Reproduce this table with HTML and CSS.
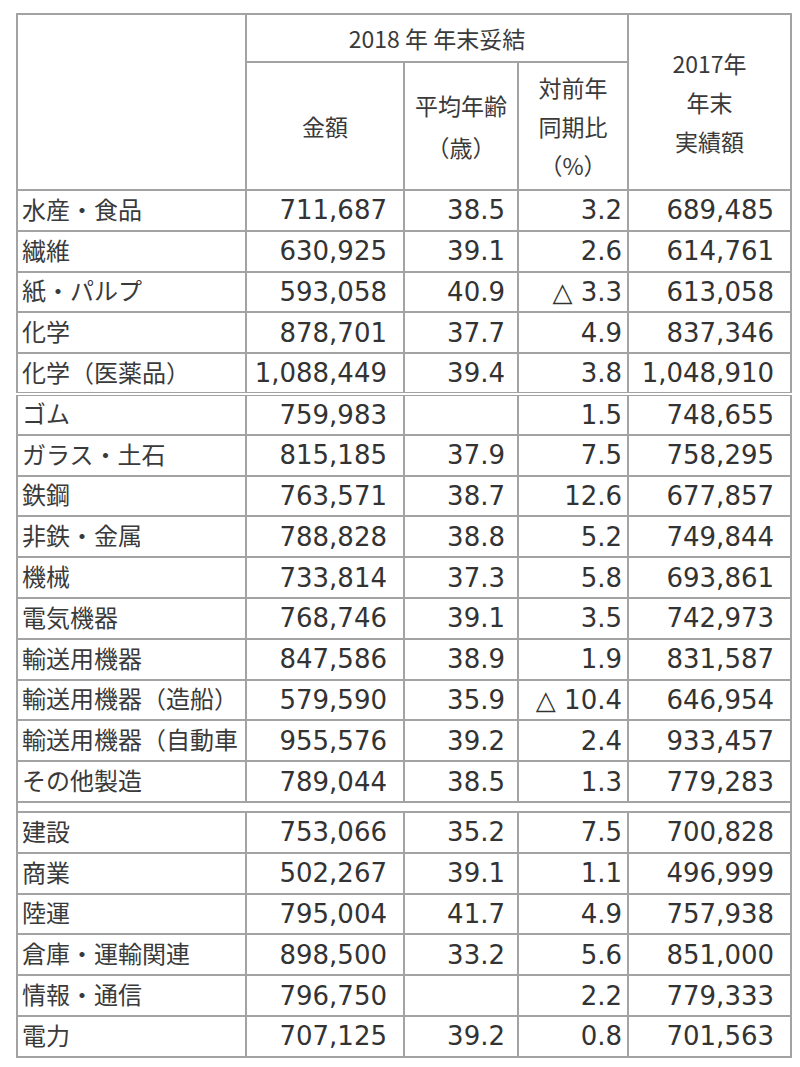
FILE: index.html
```html
<!DOCTYPE html>
<html lang="ja">
<head>
<meta charset="utf-8">
<title>2018年 年末妥結</title>
<link rel="stylesheet" href="styles.css">
</head>
<body>
<table class="wage">
  <colgroup>
    <col class="c-name">
    <col class="c-amt">
    <col class="c-age">
    <col class="c-yoy">
    <col class="c-prev">
  </colgroup>
  <thead>
    <tr class="h1">
      <th rowspan="2" class="blank"></th>
      <th colspan="3">2018 年 年末妥結</th>
      <th rowspan="2" class="multi">2017年<br>年末<br>実績額</th>
    </tr>
    <tr class="h2">
      <th>金額</th>
      <th class="multi2">平均年齢<br>（歳）</th>
      <th class="multi">対前年<br>同期比<br>（%）</th>
    </tr>
  </thead>
  <tbody>
    <tr><td class="name">水産・食品</td><td class="amt">711,687</td><td class="age">38.5</td><td class="yoy">3.2</td><td class="prev">689,485</td></tr>
    <tr><td class="name">繊維</td><td class="amt">630,925</td><td class="age">39.1</td><td class="yoy">2.6</td><td class="prev">614,761</td></tr>
    <tr><td class="name">紙・パルプ</td><td class="amt">593,058</td><td class="age">40.9</td><td class="yoy">△ 3.3</td><td class="prev">613,058</td></tr>
    <tr><td class="name">化学</td><td class="amt">878,701</td><td class="age">37.7</td><td class="yoy">4.9</td><td class="prev">837,346</td></tr>
    <tr><td class="name">化学（医薬品）</td><td class="amt">1,088,449</td><td class="age">39.4</td><td class="yoy">3.8</td><td class="prev">1,048,910</td></tr>
    <tr class="dbl"><td class="name">ゴム</td><td class="amt">759,983</td><td class="age"></td><td class="yoy">1.5</td><td class="prev">748,655</td></tr>
    <tr><td class="name">ガラス・土石</td><td class="amt">815,185</td><td class="age">37.9</td><td class="yoy">7.5</td><td class="prev">758,295</td></tr>
    <tr><td class="name">鉄鋼</td><td class="amt">763,571</td><td class="age">38.7</td><td class="yoy">12.6</td><td class="prev">677,857</td></tr>
    <tr><td class="name">非鉄・金属</td><td class="amt">788,828</td><td class="age">38.8</td><td class="yoy">5.2</td><td class="prev">749,844</td></tr>
    <tr><td class="name">機械</td><td class="amt">733,814</td><td class="age">37.3</td><td class="yoy">5.8</td><td class="prev">693,861</td></tr>
    <tr><td class="name">電気機器</td><td class="amt">768,746</td><td class="age">39.1</td><td class="yoy">3.5</td><td class="prev">742,973</td></tr>
    <tr><td class="name">輸送用機器</td><td class="amt">847,586</td><td class="age">38.9</td><td class="yoy">1.9</td><td class="prev">831,587</td></tr>
    <tr><td class="name">輸送用機器（造船）</td><td class="amt">579,590</td><td class="age">35.9</td><td class="yoy">△ 10.4</td><td class="prev">646,954</td></tr>
    <tr><td class="name">輸送用機器（自動車</td><td class="amt">955,576</td><td class="age">39.2</td><td class="yoy">2.4</td><td class="prev">933,457</td></tr>
    <tr><td class="name">その他製造</td><td class="amt">789,044</td><td class="age">38.5</td><td class="yoy">1.3</td><td class="prev">779,283</td></tr>
    <tr class="gap"><td colspan="5"></td></tr>
    <tr><td class="name">建設</td><td class="amt">753,066</td><td class="age">35.2</td><td class="yoy">7.5</td><td class="prev">700,828</td></tr>
    <tr><td class="name">商業</td><td class="amt">502,267</td><td class="age">39.1</td><td class="yoy">1.1</td><td class="prev">496,999</td></tr>
    <tr><td class="name">陸運</td><td class="amt">795,004</td><td class="age">41.7</td><td class="yoy">4.9</td><td class="prev">757,938</td></tr>
    <tr><td class="name">倉庫・運輸関連</td><td class="amt">898,500</td><td class="age">33.2</td><td class="yoy">5.6</td><td class="prev">851,000</td></tr>
    <tr><td class="name">情報・通信</td><td class="amt">796,750</td><td class="age"></td><td class="yoy">2.2</td><td class="prev">779,333</td></tr>
    <tr><td class="name">電力</td><td class="amt">707,125</td><td class="age">39.2</td><td class="yoy">0.8</td><td class="prev">701,563</td></tr>
  </tbody>
</table>
</body>
</html>
```

FILE: styles.css
```css
html, body {
  margin: 0;
  padding: 0;
  background: #ffffff;
}
body {
  padding: 13px 0 0 16px;
  color: #333333;
  font-family: "Noto Sans CJK JP", "DejaVu Sans", sans-serif;
}
.wage {
  border-collapse: collapse;
  table-layout: fixed;
  width: 774px;
}
.c-name { width: 229px; }
.c-amt { width: 158px; }
.c-age { width: 114px; }
.c-yoy { width: 110px; }
.c-prev { width: 163px; }

.wage th,
.wage td {
  border: 2px solid #a3a3a3;
  padding: 0;
  overflow: hidden;
  white-space: nowrap;
}
.wage th {
  font-family: "Noto Sans CJK JP", sans-serif;
  font-weight: normal;
  font-size: 23px;
  color: #3a3a3a;
  text-align: center;
  vertical-align: middle;
  line-height: 40px;
}
.h1 { height: 48px; }
.h2 { height: 128px; }
.wage th.multi { line-height: 39px; }
.wage th.multi2 { line-height: 42px; }

.wage tbody tr { height: 40.8px; }
.wage td {
  font-family: "DejaVu Sans", "Liberation Sans", sans-serif;
  font-size: 26px;
  line-height: 30px;
  text-align: right;
  vertical-align: middle;
  color: #333333;
}
.wage td.name {
  font-family: "Noto Sans CJK JP", sans-serif;
  font-size: 24px;
  text-align: left;
  padding-left: 4px;
  padding-bottom: 3px;
  color: #3a3a3a;
}
.wage td.amt { padding-right: 16px; }
.wage td.age { padding-right: 12px; }
.wage td.yoy { padding-right: 5px; }
.wage td.prev { padding-right: 16px; }

.wage tr.dbl td { border-top: 4px double #a3a3a3; }
.wage tr.gap { height: 10px; }
.wage tr.gap td { height: 8px; line-height: 0; font-size: 0; }
```
